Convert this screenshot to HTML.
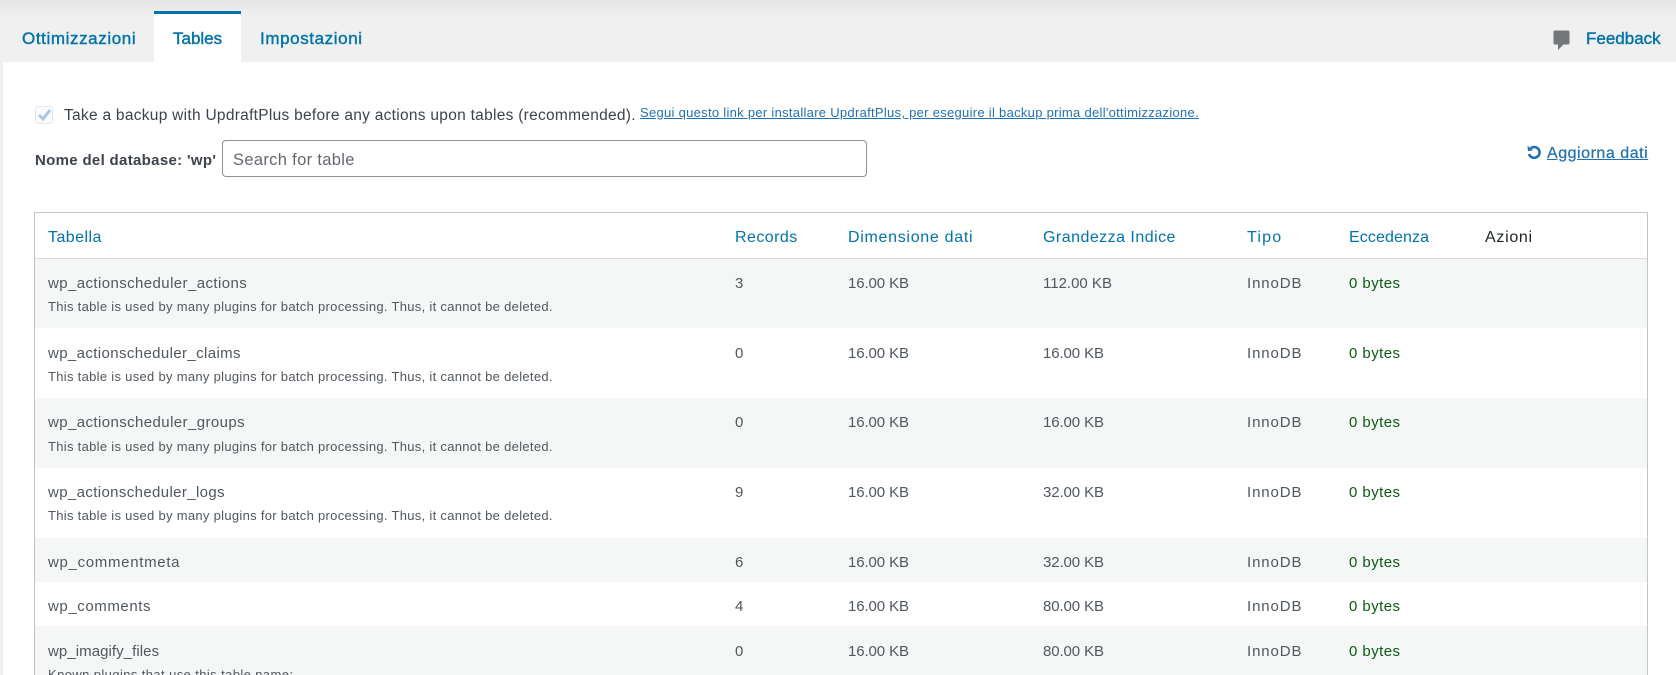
<!DOCTYPE html>
<html><head><meta charset="utf-8"><style>
html,body{margin:0;padding:0;width:1676px;height:675px;overflow:hidden;background:#f0f0f1}
body{position:relative;font-family:"Liberation Sans",sans-serif;color:#50575e}
.a{position:absolute;white-space:nowrap;line-height:20px}
.box{position:absolute}
.tab{font-size:17px;font-weight:400;color:#0073aa;-webkit-text-stroke:.4px #0073aa}
.h{font-size:16px;color:#0073aa;top:228px}
.n{font-size:15px;color:#50575e}
.v{letter-spacing:-.1px}
.i{letter-spacing:.9px}
.d{font-size:13px;letter-spacing:.3px;color:#50575e}
.g{color:#0b5a12;letter-spacing:.45px}
</style></head><body>
<div class="box" style="left:0;top:0;width:1676px;height:16px;background:linear-gradient(#e3e3e3,#f0f0f1)"></div>
<div class="box" style="left:3px;top:62px;width:1673px;height:613px;background:#fff"></div>
<div class="box" style="left:154px;top:11px;width:87px;height:51px;background:#fff;border-top:3px solid #0073aa;box-sizing:border-box"></div>
<span class="a tab" style="left:22px;top:29px;letter-spacing:.6px">Ottimizzazioni</span>
<span class="a tab" style="left:173px;top:29px">Tables</span>
<span class="a tab" style="left:260px;top:29px;letter-spacing:.6px">Impostazioni</span>
<svg class="box" style="left:1553px;top:30px" width="17" height="21" viewBox="0 0 17 21"><path d="M2 0.500h13a1.500 1.500 0 0 1 1.500 1.500v11a1.500 1.500 0 0 1-1.500 1.500h-4.500l-5.500 5.500v-5.500H2a1.500 1.500 0 0 1-1.500-1.500v-11A1.500 1.500 0 0 1 2 .5z" fill="#72777c"/></svg>
<span class="a tab" style="left:1586px;top:29px">Feedback</span>

<div class="box" style="left:35px;top:106px;width:18px;height:18px;border:1px solid #e3e6ea;border-radius:3px;box-sizing:border-box;background:#fbfcfd"></div>
<svg class="box" style="left:36px;top:107px" width="17" height="16" viewBox="0 0 17 16"><path d="M3 8l4 4 7-9" fill="none" stroke="#a9c8e4" stroke-width="3"/></svg>
<span class="a" style="left:64px;top:106px;font-size:15.5px;letter-spacing:.28px;color:#3c434a">Take a backup with UpdraftPlus before any actions upon tables (recommended).</span>
<a class="a" style="left:640px;top:103px;font-size:13px;letter-spacing:.29px;color:#2271b1;text-decoration:underline">Segui questo link per installare UpdraftPlus, per eseguire il backup prima dell'ottimizzazione.</a>
<b class="a" style="left:35px;top:151px;font-size:15px;letter-spacing:.32px;color:#3c434a">Nome del database: 'wp'</b>
<div class="box" style="left:222px;top:140px;width:645px;height:37px;border:1px solid #8c8f94;border-radius:4px;box-sizing:border-box;background:#fff"></div>
<span class="a" style="left:233px;top:150px;font-size:16.5px;letter-spacing:.33px;color:#646970">Search for table</span>
<svg class="box" style="left:1526px;top:144px" width="16" height="16" viewBox="0 0 16 16"><path d="M4.800 4.200A5.400 5.400 0 1 1 3 10" fill="none" stroke="#2271b1" stroke-width="2.600"/><path d="M1.500 1.800l.5 5.400 5.200-1z" fill="#2271b1"/></svg>
<a class="a" style="left:1547px;top:144px;font-size:16px;letter-spacing:.53px;color:#2271b1;text-decoration:underline;-webkit-text-stroke:.25px #2271b1">Aggiorna dati</a>

<div class="box" style="left:34px;top:212px;width:1614px;height:470px;border:1px solid #c3c4c7;box-sizing:border-box;background:#fff"></div>
<div class="box" style="left:35px;top:258px;width:1612px;height:1px;background:#dcdcde"></div>
<div class="box" style="left:35px;top:259px;width:1612px;height:69px;background:#f5f7f7"></div>
<div class="box" style="left:35px;top:398px;width:1612px;height:70px;background:#f5f7f7"></div>
<div class="box" style="left:35px;top:538px;width:1612px;height:44px;background:#f5f7f7"></div>
<div class="box" style="left:35px;top:626px;width:1612px;height:49px;background:#f5f7f7"></div>

<span class="a h" style="left:48px;letter-spacing:.45px">Tabella</span>
<span class="a h" style="left:735px;letter-spacing:.45px">Records</span>
<span class="a h" style="left:848px;letter-spacing:.7px">Dimensione dati</span>
<span class="a h" style="left:1043px;letter-spacing:.47px">Grandezza Indice</span>
<span class="a h" style="left:1247px;letter-spacing:1.2px">Tipo</span>
<span class="a h" style="left:1349px;letter-spacing:.1px">Eccedenza</span>
<span class="a h" style="left:1485px;letter-spacing:.7px;color:#1d2327">Azioni</span>

<span class="a n" style="left:48px;top:274px;letter-spacing:.41px">wp_actionscheduler_actions</span>
<span class="a d" style="left:48px;top:297px">This table is used by many plugins for batch processing. Thus, it cannot be deleted.</span>
<span class="a n" style="left:735px;top:274px">3</span><span class="a n v" style="left:848px;top:274px">16.00 KB</span><span class="a n" style="left:1043px;top:274px">112.00 KB</span><span class="a n i" style="left:1247px;top:274px">InnoDB</span><span class="a n g" style="left:1349px;top:274px">0 bytes</span>

<span class="a n" style="left:48px;top:344px;letter-spacing:.38px">wp_actionscheduler_claims</span>
<span class="a d" style="left:48px;top:367px">This table is used by many plugins for batch processing. Thus, it cannot be deleted.</span>
<span class="a n" style="left:735px;top:344px">0</span><span class="a n v" style="left:848px;top:344px">16.00 KB</span><span class="a n v" style="left:1043px;top:344px">16.00 KB</span><span class="a n i" style="left:1247px;top:344px">InnoDB</span><span class="a n g" style="left:1349px;top:344px">0 bytes</span>

<span class="a n" style="left:48px;top:413px;letter-spacing:.41px">wp_actionscheduler_groups</span>
<span class="a d" style="left:48px;top:437px">This table is used by many plugins for batch processing. Thus, it cannot be deleted.</span>
<span class="a n" style="left:735px;top:413px">0</span><span class="a n v" style="left:848px;top:413px">16.00 KB</span><span class="a n v" style="left:1043px;top:413px">16.00 KB</span><span class="a n i" style="left:1247px;top:413px">InnoDB</span><span class="a n g" style="left:1349px;top:413px">0 bytes</span>

<span class="a n" style="left:48px;top:483px;letter-spacing:.37px">wp_actionscheduler_logs</span>
<span class="a d" style="left:48px;top:506px">This table is used by many plugins for batch processing. Thus, it cannot be deleted.</span>
<span class="a n" style="left:735px;top:483px">9</span><span class="a n v" style="left:848px;top:483px">16.00 KB</span><span class="a n v" style="left:1043px;top:483px">32.00 KB</span><span class="a n i" style="left:1247px;top:483px">InnoDB</span><span class="a n g" style="left:1349px;top:483px">0 bytes</span>

<span class="a n" style="left:48px;top:553px;letter-spacing:.69px">wp_commentmeta</span>
<span class="a n" style="left:735px;top:553px">6</span><span class="a n v" style="left:848px;top:553px">16.00 KB</span><span class="a n v" style="left:1043px;top:553px">32.00 KB</span><span class="a n i" style="left:1247px;top:553px">InnoDB</span><span class="a n g" style="left:1349px;top:553px">0 bytes</span>

<span class="a n" style="left:48px;top:597px;letter-spacing:.58px">wp_comments</span>
<span class="a n" style="left:735px;top:597px">4</span><span class="a n v" style="left:848px;top:597px">16.00 KB</span><span class="a n v" style="left:1043px;top:597px">80.00 KB</span><span class="a n i" style="left:1247px;top:597px">InnoDB</span><span class="a n g" style="left:1349px;top:597px">0 bytes</span>

<span class="a n" style="left:48px;top:642px;letter-spacing:.07px">wp_imagify_files</span>
<span class="a n" style="left:735px;top:642px">0</span><span class="a n v" style="left:848px;top:642px">16.00 KB</span><span class="a n v" style="left:1043px;top:642px">80.00 KB</span><span class="a n i" style="left:1247px;top:642px">InnoDB</span><span class="a n g" style="left:1349px;top:642px">0 bytes</span>
<span class="a d" style="left:48px;top:665px;letter-spacing:.4px">Known plugins that use this table name:</span>
</body></html>
